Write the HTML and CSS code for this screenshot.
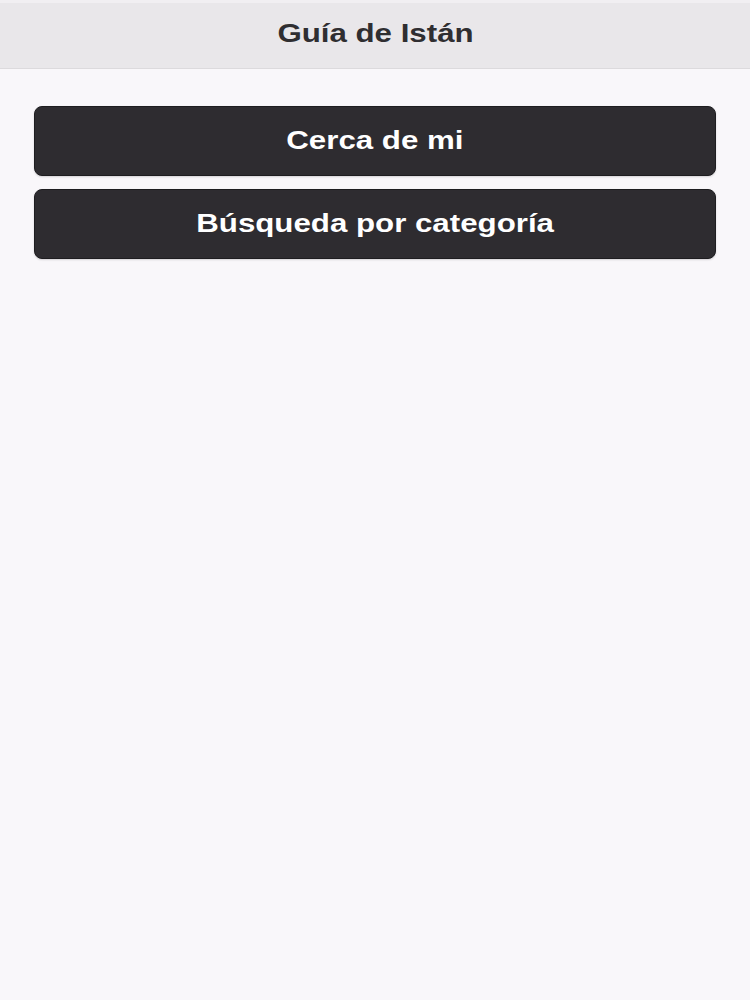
FILE: index.html
```html
<!DOCTYPE html>
<html lang="es">
<head>
<meta charset="utf-8">
<title>Guía de Istán</title>
<link rel="stylesheet" href="styles.css">
</head>
<body>
<header class="topbar">
  <h1 class="title"><span class="stretch">Guía de Istán</span></h1>
</header>
<main class="content">
  <button class="menu-btn"><span class="stretch">Cerca de mi</span></button>
  <button class="menu-btn"><span class="stretch">Búsqueda por categoría</span></button>
</main>
</body>
</html>
```

FILE: styles.css
```css
html, body {
  margin: 0;
  padding: 0;
  background: #f9f7fa;
  height: 100%;
}
body {
  font-family: "Liberation Sans", Arial, sans-serif;
}
.stretch {
  display: inline-block;
  transform: scaleX(1.25);
  transform-origin: center;
}
.topbar {
  height: 69px;
  border-top: 3px solid #f1eff2;
  border-bottom: 1px solid #dcdadd;
  background: #e9e7ea;
  display: flex;
  align-items: center;
  justify-content: center;
  box-sizing: border-box;
}
.title {
  margin: 0 0 4px;
  font-family: "Liberation Sans", Arial, sans-serif;
  font-weight: 700;
  font-size: 25px;
  color: #2f2e31;
}
.content {
  padding: 37px 34px 0;
  display: flex;
  flex-direction: column;
  gap: 13px;
}
.menu-btn {
  height: 70px;
  width: 100%;
  border: 1px solid #1e1d20;
  border-radius: 8px;
  background: #2e2c30;
  color: #ffffff;
  font-family: "Liberation Sans", Arial, sans-serif;
  font-weight: 700;
  font-size: 25px;
  box-shadow: 0 1px 2px rgba(0,0,0,0.15);
  cursor: pointer;
  padding: 0 0 2px;
}
```
